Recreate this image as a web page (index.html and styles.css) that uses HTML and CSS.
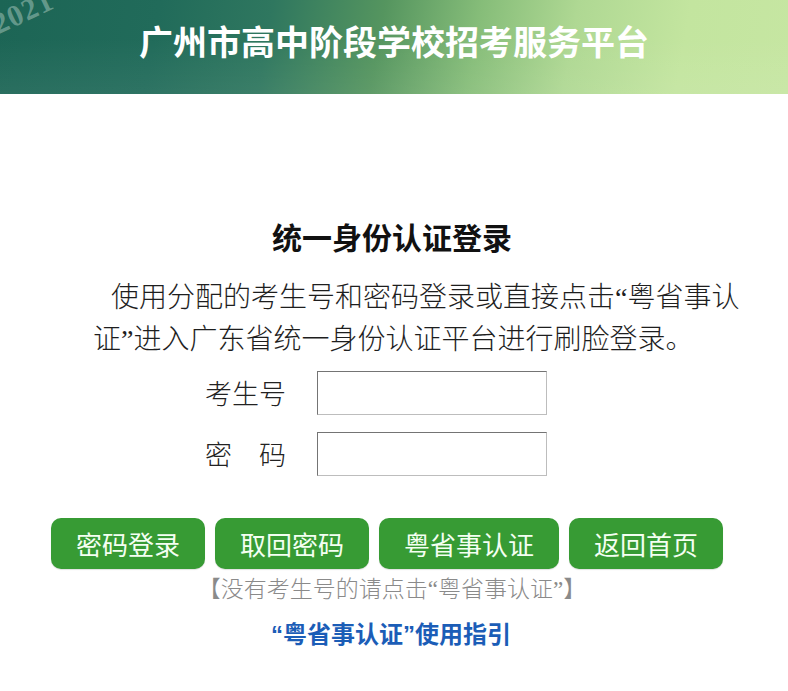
FILE: index.html
```html
<!DOCTYPE html>
<html lang="zh-CN">
<head>
<meta charset="utf-8">
<title>广州市高中阶段学校招考服务平台</title>
<link rel="stylesheet" href="styles.css">
</head>
<body>
<header class="banner">
  <span class="year-mark">2021</span>
  <h1 class="banner-title">广州市高中阶段学校招考服务平台</h1>
</header>
<main class="login">
  <h2 class="login-title">统一身份认证登录</h2>
  <p class="login-intro">使用分配的考生号和密码登录或直接点击“粤省事认证”进入广东省统一身份认证平台进行刷脸登录。</p>
  <form class="login-form">
    <label class="field-label" for="ksh">考生号</label>
    <input class="field-input" id="ksh" type="text">
    <label class="field-label" for="mm">密　码</label>
    <input class="field-input" id="mm" type="password">
  </form>
  <div class="actions">
    <button class="btn" type="button">密码登录</button>
    <button class="btn" type="button">取回密码</button>
    <button class="btn" type="button">粤省事认证</button>
    <button class="btn" type="button">返回首页</button>
  </div>
  <p class="hint">【没有考生号的请点击“粤省事认证”】</p>
  <a class="guide" href="#">“粤省事认证”使用指引</a>
</main>
</body>
</html>
```
FILE: styles.css
```css
* {
  box-sizing: border-box;
}

html, body {
  margin: 0;
  padding: 0;
  background: #ffffff;
}

body {
  font-family: "Liberation Sans", "Noto Sans CJK SC", sans-serif;
  color: #1a1a1a;
}

.banner {
  position: relative;
  height: 94px;
  overflow: hidden;
  display: flex;
  align-items: center;
  justify-content: center;
  background:
    linear-gradient(180deg, rgba(255,255,255,0) 40%, rgba(255,255,255,0.06) 100%),
    linear-gradient(100deg, #1c6555 0%, #216b5a 20%, #2f775f 34%, #55955f 48%, #86bd79 60%, #afd893 72%, #c3e59f 86%, #c6e6a2 100%);
}

.year-mark {
  position: absolute;
  left: 0;
  top: 9px;
  font-family: "Liberation Serif", serif;
  font-weight: bold;
  font-size: 30px;
  letter-spacing: 1px;
  color: rgba(190, 215, 205, 0.45);
  transform: rotate(-25deg);
  transform-origin: left bottom;
  line-height: 1;
}

.banner-title {
  margin: 0 0 12px 0;
  font-family: "Noto Sans CJK SC", sans-serif;
  font-size: 34px;
  font-weight: bold;
  color: #ffffff;
  line-height: 44px;
}

.login {
  display: flex;
  flex-direction: column;
  padding-top: 122px;
}

.login-title {
  margin: 0;
  text-align: center;
  font-family: "Noto Sans CJK SC", sans-serif;
  font-size: 30px;
  font-weight: bold;
  line-height: 40px;
  color: #111111;
  padding-right: 4px;
}

.login-intro {
  margin: 21px 0 0 93px;
  width: 662px;
  font-family: "Liberation Serif", "Noto Sans CJK SC", serif;
  font-weight: 300;
  font-size: 28px;
  line-height: 42px;
  text-indent: 18px;
  color: #1e1e1e;
}

.login-form {
  margin: 10px 0 0 205px;
  display: grid;
  grid-template-columns: 82px 230px;
  column-gap: 30px;
  row-gap: 17px;
  align-items: center;
}

.field-label {
  font-family: "Noto Sans CJK SC", sans-serif;
  font-weight: 300;
  font-size: 27px;
  line-height: 44px;
  color: #222222;
  white-space: nowrap;
}

.field-input {
  width: 230px;
  height: 44px;
  margin: 0;
  padding: 0 6px;
  border: 1px solid #bdbdbd;
  border-top-color: #747474;
  border-left-color: #747474;
  background: #ffffff;
  font-size: 20px;
  outline: none;
}

.actions {
  margin: 42px 0 0 51px;
  display: flex;
  gap: 10px;
}

.btn {
  height: 51px;
  padding: 0 25px;
  border: none;
  border-radius: 10px;
  background: #379b34;
  color: #f4fff2;
  font-family: "Noto Sans CJK SC", sans-serif;
  font-size: 26px;
  line-height: 51px;
  white-space: nowrap;
  cursor: pointer;
  box-shadow: 0 1px 1px rgba(0, 0, 0, 0.12);
}

.hint {
  margin: 6px 0 0 0;
  text-align: center;
  font-family: "Liberation Serif", "Noto Sans CJK SC", serif;
  font-weight: 300;
  font-size: 23px;
  line-height: 30px;
  color: #8a8a8a;
  padding-right: 4px;
}

.guide {
  margin-top: 15px;
  align-self: center;
  font-family: "Liberation Sans", "Noto Sans CJK SC", sans-serif;
  font-weight: bold;
  font-size: 24px;
  line-height: 30px;
  color: #1b5db7;
  text-decoration: none;
  margin-right: 6px;
}
```
